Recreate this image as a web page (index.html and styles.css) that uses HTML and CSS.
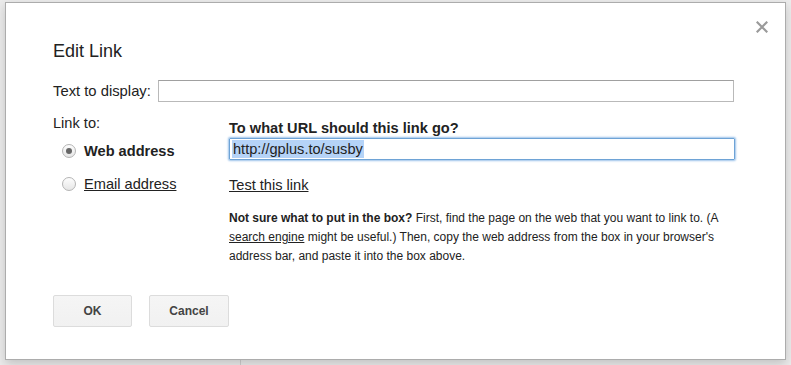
FILE: index.html
```html
<!DOCTYPE html>
<html lang="en">
<head>
  <meta charset="UTF-8" />
  <title>Edit Link</title>
  <link rel="stylesheet" href="styles.css">
</head>
<body>
  <div class="backdrop-line"></div>

  <div class="dialog">
    <button class="close" title="Close">
      <svg width="12" height="12" viewBox="0 0 12 12">
        <path d="M1.5 1.5 L10.5 10.5 M10.5 1.5 L1.5 10.5" stroke="#9a9a9a" stroke-width="2.2" stroke-linecap="square"/>
      </svg>
    </button>

    <h1 class="title">Edit Link</h1>

    <div class="display-row">
      <label class="field-label">Text to display:</label>
      <div class="text-input"></div>
    </div>

    <div class="link-section">
      <div class="link-types">
        <div class="section-label">Link to:</div>
        <div class="radio-row first">
          <span class="radio checked"></span>
          <span class="radio-text bold">Web address</span>
        </div>
        <div class="radio-row">
          <span class="radio"></span>
          <span class="radio-text link">Email address</span>
        </div>
      </div>

      <div class="link-target">
        <div class="target-heading">To what URL should this link go?</div>
        <div class="url-input"><span class="selected">http://gplus.to/susby</span></div>
        <a class="test-link">Test this link</a>
        <p class="help">
          <b>Not sure what to put in the box?</b> First, find the page on the web that you want to link to. (A
          <span class="help-link">search engine</span> might be useful.) Then, copy the web address from the box in your browser's
          address bar, and paste it into the box above.
        </p>
      </div>
    </div>

    <div class="actions">
      <button class="btn ok">OK</button>
      <button class="btn cancel">Cancel</button>
    </div>
  </div>
</body>
</html>
```

FILE: styles.css
```css
body {
  margin: 0;
  padding: 2px 0 0 5px;
  background: #ececec;
  font-family: "Liberation Sans", Arial, sans-serif;
  color: #222;
  position: relative;
  height: 363px;
  overflow: hidden;
}
.backdrop-line {
  position: absolute;
  left: 240px;
  top: 355px;
  width: 1px;
  height: 10px;
  background: #d0d0d0;
}
.dialog {
  position: relative;
  height: 356px;
  background: #fff;
  border: 1px solid #acacac;
  box-shadow: 0 4px 10px rgba(0,0,0,0.18);
  padding: 0 0 0 47px;
  box-sizing: content-box;
  width: 732px;
}
.close {
  position: absolute;
  left: 747px;
  top: 15px;
  width: 18px;
  height: 18px;
  padding: 0;
  border: none;
  background: none;
  display: flex;
  align-items: center;
  justify-content: center;
  cursor: pointer;
}
.title {
  margin: 0;
  padding-top: 38px;
  font-size: 18px;
  line-height: 20px;
  font-weight: normal;
  color: #222;
}
.display-row {
  display: flex;
  align-items: center;
  margin-top: 19px;
  height: 22px;
}
.field-label {
  font-size: 14.8px;
  width: 105px;
  color: #222;
}
.text-input {
  width: 574px;
  height: 20px;
  border: 1px solid #b9b9b9;
  border-top-color: #a0a0a0;
}
.link-section {
  display: flex;
  margin-top: 13px;
}
.link-types {
  width: 176px;
  font-size: 14.6px;
}
.section-label {
  line-height: 16px;
}
.radio-row {
  display: flex;
  align-items: center;
  height: 16px;
  margin-top: 17px;
}
.radio-row.first {
  margin-top: 12px;
}
.radio {
  width: 12px;
  height: 12px;
  border: 1px solid #b4b4b4;
  border-radius: 50%;
  background: linear-gradient(#fdfdfd, #e6e6e6);
  margin: 0 8px 0 9px;
  display: flex;
  align-items: center;
  justify-content: center;
}
.radio.checked::after {
  content: "";
  width: 6px;
  height: 6px;
  border-radius: 50%;
  background: #666;
}
.radio-text.bold {
  font-weight: bold;
}
.radio-text.link {
  text-decoration: underline;
}
.link-target {
  width: 506px;
  margin-top: 5px;
  font-size: 14.6px;
}
.target-heading {
  font-weight: bold;
  line-height: 16px;
}
.url-input {
  margin-top: 2px;
  height: 20px;
  border: 1px solid #6ea3d6;
  box-shadow: 0 0 2px 1px #9cc3ea;
  border-radius: 1px;
  display: flex;
  align-items: center;
  padding-left: 2px;
}
.selected {
  background: #b5d3f7;
  line-height: 18px;
  padding: 0 1px;
}
.test-link {
  display: block;
  margin-top: 17px;
  line-height: 16px;
  text-decoration: underline;
  color: #222;
}
.help {
  margin: 16px 0 0;
  font-size: 12px;
  line-height: 19px;
  color: #222;
  width: 505px;
}
.help-link {
  text-decoration: underline;
}
.actions {
  display: flex;
  gap: 17px;
  margin-top: 29px;
}
.btn {
  height: 32px;
  border: 1px solid #dcdcdc;
  border-radius: 2px;
  background: linear-gradient(#f5f5f5, #f1f1f1);
  color: #444;
  font-family: "Liberation Sans", Arial, sans-serif;
  font-size: 12px;
  font-weight: bold;
  padding: 0;
}
.btn.ok {
  width: 79px;
}
.btn.cancel {
  width: 80px;
}
```
